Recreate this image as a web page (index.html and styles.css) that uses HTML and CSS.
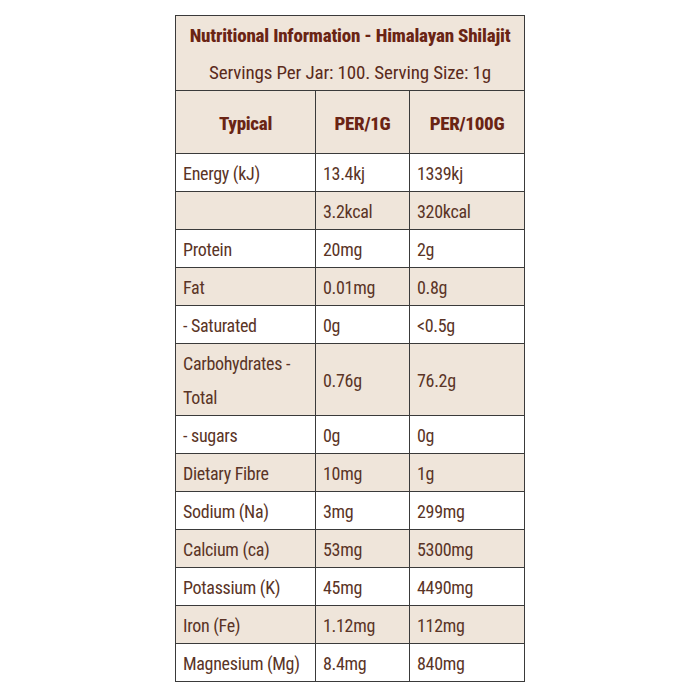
FILE: index.html
```html
<!DOCTYPE html>
<html>
<head>
<meta charset="utf-8">
<link rel="stylesheet" href="styles.css">
</head>
<body>
<div class="page">
<table class="nutri">
  <colgroup><col class="c1"><col class="c2"><col class="c3"></colgroup>
  <thead>
    <tr><th colspan="3" class="title">
      <div class="t1">Nutritional Information - Himalayan Shilajit</div>
      <div class="t2">Servings Per Jar: 100. Serving Size: 1g</div>
    </th></tr>
    <tr class="colhead"><th>Typical</th><th>PER/1G</th><th>PER/100G</th></tr>
  </thead>
  <tbody>
    <tr><td>Energy (kJ)</td><td>13.4kj</td><td>1339kj</td></tr>
    <tr class="alt"><td></td><td>3.2kcal</td><td>320kcal</td></tr>
    <tr><td>Protein</td><td>20mg</td><td>2g</td></tr>
    <tr class="alt"><td>Fat</td><td>0.01mg</td><td>0.8g</td></tr>
    <tr><td>- Saturated</td><td>0g</td><td>&lt;0.5g</td></tr>
    <tr class="alt"><td class="two">Carbohydrates - Total</td><td>0.76g</td><td>76.2g</td></tr>
    <tr><td>- sugars</td><td>0g</td><td>0g</td></tr>
    <tr class="alt"><td>Dietary Fibre</td><td>10mg</td><td>1g</td></tr>
    <tr><td>Sodium (Na)</td><td>3mg</td><td>299mg</td></tr>
    <tr class="alt"><td>Calcium (ca)</td><td>53mg</td><td>5300mg</td></tr>
    <tr><td>Potassium (K)</td><td>45mg</td><td>4490mg</td></tr>
    <tr class="alt"><td>Iron (Fe)</td><td>1.12mg</td><td>112mg</td></tr>
    <tr><td>Magnesium (Mg)</td><td>8.4mg</td><td>840mg</td></tr>
  </tbody>
</table>
</div>
</body>
</html>
```
FILE: styles.css
```css
html, body {
  margin: 0;
  padding: 0;
  background: #ffffff;
}
.page {
  padding: 15px 0 0 175px;
}
.nutri {
  border-collapse: collapse;
  table-layout: fixed;
  width: 349px;
  font-family: "Roboto", "Liberation Sans", sans-serif;
  font-stretch: 75%;
  color: #5a3426;
  font-size: 18px;
  letter-spacing: -0.3px;
}
.c1 { width: 140px; }
.c2 { width: 94px; }
.c3 { width: 115px; }
.nutri th, .nutri td {
  border: 1px solid #3a3a3a;
  padding: 0 7px;
  text-align: left;
  vertical-align: middle;
}
.nutri td {
  height: 35px;
  line-height: 22px;
  padding-top: 2px;
}
.title {
  background: #efe5da;
  text-align: center !important;
  height: 74px;
  padding: 0 !important;
}
.t1 {
  font-weight: 800;
  font-size: 19px;
  letter-spacing: -0.2px;
  color: #6a2414;
  line-height: 40px;
}
.t2 {
  font-weight: normal;
  font-size: 19px;
  letter-spacing: -0.15px;
  color: #5a2a1a;
  line-height: 34px;
}
.colhead th {
  background: #efe5da;
  text-align: center;
  height: 59px;
  padding-top: 3px;
  font-weight: 800;
  font-size: 19px;
  color: #6a2414;
}
.alt td {
  background: #efe5da;
}
.nutri td.two {
  line-height: 34px;
  height: 69px;
}
```
